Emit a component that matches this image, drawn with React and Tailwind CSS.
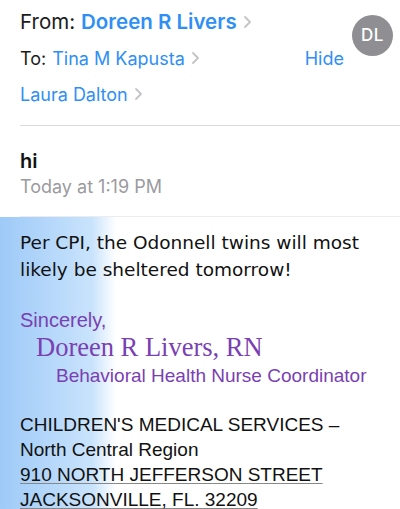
import React from "react";

function Chevron() {
  return (
    <svg width="9" height="14" viewBox="0 0 9 14" className="ml-[6px] shrink-0">
      <path d="M2 2l5 5-5 5" fill="none" stroke="#c4c4c8" strokeWidth="1.8" strokeLinecap="round" strokeLinejoin="round" />
    </svg>
  );
}

export default function App() {
  return (
    <div className="w-[400px] h-[509px] overflow-hidden bg-white relative" style={{ fontFamily: "Inter, 'Open Sans', sans-serif" }}>
      {/* Header */}
      <div className="relative pt-[4px]">
        <div className="absolute top-[15px] left-[352px] w-[41px] h-[41px] rounded-full bg-[#8e8e93] flex items-center justify-center text-white text-[17px] font-medium tracking-[0.5px]">
          DL
        </div>
        <div className="pl-5 h-[36px] flex items-center text-[20.5px]">
          <span className="text-[#1c1c1e]">From:</span>
          <span className="ml-[6px] text-[#2f8ff5] font-semibold">Doreen R Livers</span>
          <Chevron />
        </div>
        <div className="pl-5 pr-[56px] h-[36px] flex items-center text-[18px]">
          <span className="text-[#1c1c1e]">To:</span>
          <span className="ml-[6px] text-[#2f8ff5]">Tina M Kapusta</span>
          <Chevron />
          <span className="ml-auto text-[#2f8ff5]">Hide</span>
        </div>
        <div className="pl-5 h-[36px] flex items-center text-[18px]">
          <span className="text-[#2f8ff5]">Laura Dalton</span>
          <Chevron />
        </div>
      </div>
      <div className="ml-5 mt-[13px] h-px bg-[#d9d9dc]" />
      <div className="pl-5 mt-[21px]">
        <div className="h-[26px] flex items-center text-[20px] font-semibold text-[#111] pt-[2px]">hi</div>
        <div className="h-[26px] flex items-center text-[18px] text-[#9b9b9f]">Today at 1:19 PM</div>
      </div>
      <div className="ml-5 mt-[17px] h-px bg-[#ececee]" />

      {/* Body */}
      <div className="h-[300px] pl-5 pt-[12px] bg-[linear-gradient(to_right,#9ecaf8_0px,#c9e3fc_92px,#ffffff_116px)]">
        <div className="text-[18.5px] leading-[27px] text-[#111]" style={{ fontFamily: "'DejaVu Sans', Verdana, sans-serif" }}>
          Per CPI, the Odonnell twins will most<br />likely be sheltered tomorrow!
        </div>
        <div className="mt-[25px] text-[20px] leading-[25px] text-[#7a3fb2]" style={{ fontFamily: "'Liberation Sans', Arial, sans-serif" }}>
          Sincerely,
        </div>
        <div className="pl-4 text-[26.5px] leading-[28px] text-[#7a3fb2]" style={{ fontFamily: "'Liberation Serif', 'Times New Roman', serif" }}>
          Doreen R Livers, RN
        </div>
        <div className="pl-9 text-[19px] leading-[30px] text-[#7a3fb2]" style={{ fontFamily: "'Liberation Sans', Arial, sans-serif" }}>
          Behavioral Health Nurse Coordinator
        </div>
        <div className="mt-[21px] text-[19px] leading-[25px] text-[#111]" style={{ fontFamily: "'Liberation Sans', Arial, sans-serif" }}>
          <div>CHILDREN'S MEDICAL SERVICES –</div>
          <div>North Central Region</div>
          <div className="underline decoration-[#888] underline-offset-[2px]">910 NORTH JEFFERSON STREET</div>
          <div className="underline decoration-[#888] underline-offset-[2px]">JACKSONVILLE, FL. 32209</div>
        </div>
      </div>
    </div>
  );
}
